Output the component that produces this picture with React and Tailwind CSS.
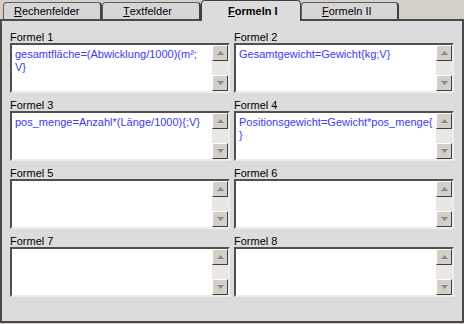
import React from "react";

const font = { fontFamily: '"Liberation Sans", Arial, sans-serif' };

function Arrow({ up }) {
  return (
    <svg width="7" height="4" viewBox="0 0 7 4">
      {up ? <polygon points="3.5,0 7,4 0,4" fill="#8a8a8a" /> : <polygon points="0,0 7,0 3.5,4" fill="#8a8a8a" />}
    </svg>
  );
}

function ScrollBtn({ up }) {
  return (
    <div className="w-[16px] h-[16px] bg-[#d4d0c8] border border-t-white border-l-white border-r-[#404040] border-b-[#404040] flex items-center justify-center">
      <Arrow up={up} />
    </div>
  );
}

function Field({ label, lines }) {
  return (
    <div className="flex flex-col">
      <div className="h-[12px] leading-[12px] text-[11px] text-black pl-[0px]">{label}</div>
      <div className="mt-[0px] h-[50px] border-2 border-t-[#505050] border-l-[#505050] border-r-[#ececec] border-b-[#ececec] bg-white flex">
        <div className="flex-1 pl-[3px] pt-[3px] text-[11px] leading-[13px] text-[#3a3aff] overflow-hidden">
          {lines.map((l, i) => (
            <div key={i} className="whitespace-nowrap">{l}</div>
          ))}
        </div>
        <div className="w-[16px] flex flex-col bg-[#e9e7e1]">
          <ScrollBtn up />
          <div className="flex-1" />
          <ScrollBtn />
        </div>
      </div>
    </div>
  );
}

function Tab({ label, ul, selected, w, pl }) {
  return (
    <div
      className={
        selected
          ? "relative z-10 h-[21px] -mb-[2px] bg-[#dcdcdc] border border-b-0 border-[#404040] rounded-t-[4px] font-bold flex items-center text-[11px]"
          : "h-[17px] bg-[#d6d6d6] border border-b-0 border-l-[#606060] border-t-[#606060] border-r-2 border-r-[#404040] rounded-t-[4px] flex items-center text-[11px]"
      }
      style={{ width: w, paddingLeft: pl }}
    >
      <span className="underline">{ul}</span>
      {label}
    </div>
  );
}

export default function App() {
  const fields = [
    ["Formel 1", ["gesamtfläche=(Abwicklung/1000)(m²;", "V}"]],
    ["Formel 2", ["Gesamtgewicht=Gewicht{kg;V}"]],
    ["Formel 3", ["pos_menge=Anzahl*(Länge/1000){;V}"]],
    ["Formel 4", ["Positionsgewicht=Gewicht*pos_menge{", "}"]],
    ["Formel 5", []],
    ["Formel 6", []],
    ["Formel 7", []],
    ["Formel 8", []],
  ];
  return (
    <div className="w-[464px] h-[324px] bg-[#d4d0c8] flex flex-col overflow-hidden" style={font}>
      <div className="h-[19px] flex items-end pl-[3px]">
        <Tab ul="R" label="echenfelder" w={99} pl={10} />
        <Tab ul="T" label="extfelder" w={99} pl={20} />
        <Tab ul="F" label="ormeln I" selected w={100} pl={26} />
        <Tab ul="F" label="ormeln II" w={98} pl={20} />
      </div>
      <div className="h-[304px] bg-[#dcdcdc] border-2 border-[#4a4a4a] pt-[10px] pl-[8px] pr-[7px]">
        <div className="grid grid-cols-[220px_220px] gap-x-[4px] gap-y-[6px]">
          {fields.map(([l, lines]) => (
            <Field key={l} label={l} lines={lines} />
          ))}
        </div>
      </div>
    </div>
  );
}
